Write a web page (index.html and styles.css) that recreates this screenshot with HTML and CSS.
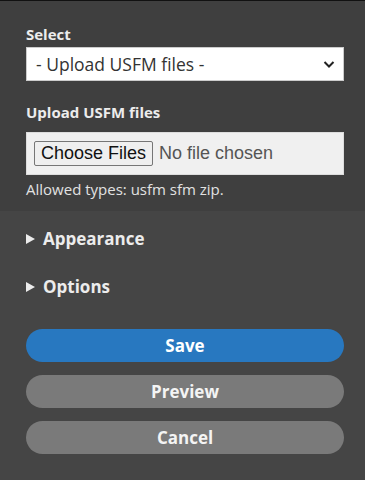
FILE: index.html
```html
<!DOCTYPE html>
<html lang="en">
<head>
  <meta charset="UTF-8" />
  <meta name="viewport" content="width=device-width, initial-scale=1.0"/>
  <title>Upload USFM</title>
  <link rel="stylesheet" href="styles.css">
</head>
<body>

  <form class="panel">
    <div class="panel-top">
      <div class="field">
        <label for="source">Select</label>
        <div class="select-wrap">
          <select id="source">
            <option>- Upload USFM files -</option>
          </select>
          <svg class="chevron" width="14" height="9" viewBox="0 0 14 9">
            <path d="M2.5 2l4.5 4.5 4.5-4.5" fill="none" stroke="#222" stroke-width="2"/>
          </svg>
        </div>
      </div>

      <div class="field">
        <label for="files">Upload USFM files</label>
        <div class="file-box">
          <input type="file" id="files" multiple>
        </div>
        <div class="help">Allowed types: usfm sfm zip.</div>
      </div>
    </div>

    <div class="panel-bottom">
      <details>
        <summary><span class="arrow"></span>Appearance</summary>
      </details>
      <details>
        <summary><span class="arrow"></span>Options</summary>
      </details>

      <div class="actions">
        <button type="button" class="btn btn-primary">Save</button>
        <button type="button" class="btn">Preview</button>
        <button type="button" class="btn">Cancel</button>
      </div>
    </div>
  </form>

</body>
</html>
```

FILE: styles.css
```css
* {
  box-sizing: border-box;
}

body {
  margin: 0;
  font-family: 'Open Sans', sans-serif;
  background: #454545;
  color: #ececec;
  border-top: 1px solid #111;
}

.panel-top {
  background: #3f3f3f;
  padding: 24px 21px 12px 26px;
}

.field + .field {
  margin-top: 22px;
}

.field label {
  display: block;
  font-weight: bold;
  font-size: 15px;
  line-height: 19px;
  margin-bottom: 3px;
}

/* Select */
.select-wrap {
  position: relative;
}

.select-wrap select {
  display: block;
  width: 100%;
  height: 34px;
  appearance: none;
  -webkit-appearance: none;
  background: #fff;
  border: 1px solid #ccc;
  border-radius: 0;
  padding: 0 30px 0 9px;
  font-family: 'Open Sans', sans-serif;
  font-size: 17.5px;
  color: #333;
}

.chevron {
  position: absolute;
  right: 8px;
  top: 13px;
  pointer-events: none;
}

/* File input */
.file-box {
  background: #f0f0f0;
  border: 1px solid #ddd;
  height: 43px;
  padding: 7px 7px;
  display: flex;
  align-items: center;
  margin-top: 10px;
}

.file-box input {
  font-family: 'Liberation Sans', Arial, sans-serif;
  font-size: 18px;
  color: #555;
}

.file-box input::file-selector-button {
  font-family: 'Liberation Sans', Arial, sans-serif;
  font-size: 18px;
  color: #111;
  background: #efefef;
  border: 1px solid #767676;
  border-radius: 2px;
  padding: 1px 6px;
  margin-right: 6px;
}

.help {
  margin-top: 5px;
  font-size: 15px;
  line-height: 19px;
  color: #e2e2e2;
}

/* Collapsibles */
.panel-bottom {
  padding: 4px 21px 20px 26px;
}

details summary {
  list-style: none;
  font-weight: bold;
  font-size: 17px;
  line-height: 24px;
  padding: 12px 0;
  cursor: pointer;
  display: flex;
  align-items: center;
}

details summary::-webkit-details-marker {
  display: none;
}

.arrow {
  width: 0;
  height: 0;
  border-top: 5px solid transparent;
  border-bottom: 5px solid transparent;
  border-left: 9px solid #ececec;
  margin-right: 8px;
}

/* Buttons */
.actions {
  margin-top: 18px;
  display: flex;
  flex-direction: column;
  gap: 13px;
}

.btn {
  height: 33px;
  border: none;
  border-radius: 17px;
  background: #7a7a7a;
  color: #f4f4f4;
  font-family: 'Open Sans', sans-serif;
  font-weight: bold;
  font-size: 17px;
  cursor: pointer;
}

.btn-primary {
  background: #2878c0;
  color: #fff;
}
```
